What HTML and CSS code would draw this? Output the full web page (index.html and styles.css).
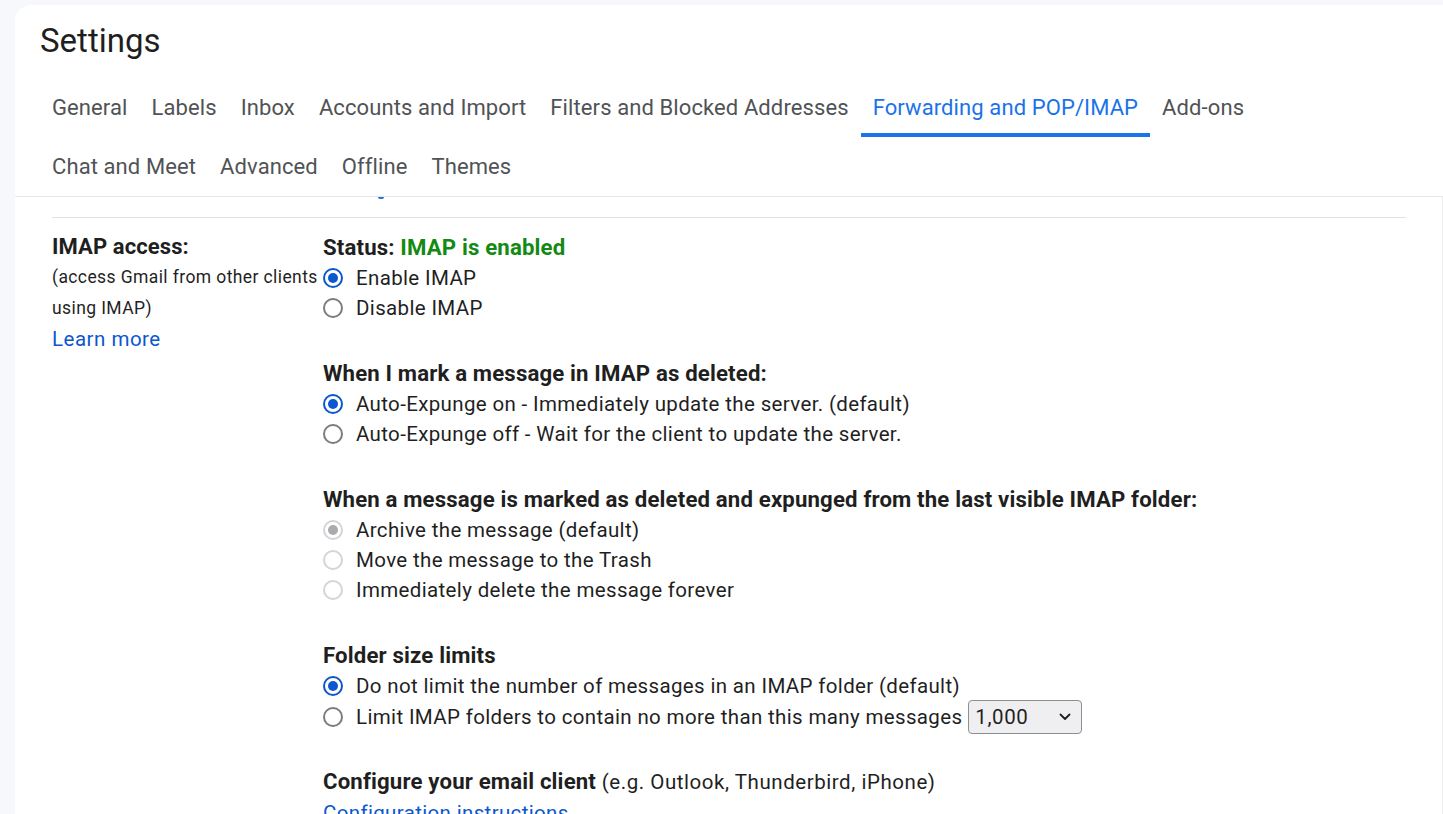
FILE: index.html
```html
<!DOCTYPE html>
<html lang="en">
<head>
<meta charset="utf-8">
<title>Settings</title>
<link rel="stylesheet" href="styles.css">
</head>
<body>
<div class="card">
  <header class="head">
    <h1 class="title">Settings</h1>
    <nav class="tabs">
      <div class="tab-row">
        <a class="tab">General</a>
        <a class="tab">Labels</a>
        <a class="tab">Inbox</a>
        <a class="tab">Accounts and Import</a>
        <a class="tab">Filters and Blocked Addresses</a>
        <a class="tab active">Forwarding and POP/IMAP</a>
        <a class="tab">Add-ons</a>
      </div>
      <div class="tab-row">
        <a class="tab">Chat and Meet</a>
        <a class="tab">Advanced</a>
        <a class="tab">Offline</a>
        <a class="tab">Themes</a>
      </div>
    </nav>
  </header>
  <main class="content">
    <div class="prev-row">
      <span class="tail"></span>
    </div>
    <div class="setting-row">
      <div class="label-col">
        <div class="label-title">IMAP access:</div>
        <div class="label-sub">(access Gmail from other clients using IMAP)</div>
        <a class="link learn">Learn more</a>
      </div>
      <div class="value-col">
        <section class="block first">
          <div class="heading">Status: <span class="ok">IMAP is enabled</span></div>
          <label class="opt"><span class="radio on"></span>Enable IMAP</label>
          <label class="opt"><span class="radio"></span>Disable IMAP</label>
        </section>
        <section class="block">
          <div class="heading">When I mark a message in IMAP as deleted:</div>
          <label class="opt"><span class="radio on"></span>Auto-Expunge on - Immediately update the server. (default)</label>
          <label class="opt"><span class="radio"></span>Auto-Expunge off - Wait for the client to update the server.</label>
        </section>
        <section class="block">
          <div class="heading">When a message is marked as deleted and expunged from the last visible IMAP folder:</div>
          <label class="opt"><span class="radio dis on"></span>Archive the message (default)</label>
          <label class="opt"><span class="radio dis"></span>Move the message to the Trash</label>
          <label class="opt"><span class="radio dis"></span>Immediately delete the message forever</label>
        </section>
        <section class="block">
          <div class="heading">Folder size limits</div>
          <label class="opt"><span class="radio on"></span>Do not limit the number of messages in an IMAP folder (default)</label>
          <label class="opt opt-select"><span class="radio"></span>Limit IMAP folders to contain no more than this many messages
            <span class="select">1,000<svg class="chev" width="12" height="8" viewBox="0 0 12 8"><path d="M1.5 1.5 6 6l4.5-4.5" fill="none" stroke="#1f1f1f" stroke-width="1.8" stroke-linecap="round" stroke-linejoin="round"/></svg></span>
          </label>
        </section>
        <section class="block tight">
          <div class="heading">Configure your email client <span class="reg">(e.g. Outlook, Thunderbird, iPhone)</span></div>
          <a class="link">Configuration instructions</a>
        </section>
      </div>
    </div>
    <div class="thumb"></div>
  </main>
</div>
</body>
</html>
```
FILE: styles.css
```css
html, body {
  margin: 0;
  padding: 0;
  height: 100%;
  overflow: hidden;
}
body {
  background: #f6f8fc;
  font-family: Roboto, "Liberation Sans", Arial, sans-serif;
  color: #1f1f1f;
}
.card {
  margin: 5px 0 0 15px;
  height: 809px;
  background: #fff;
  border-top-left-radius: 16px;
  display: flex;
  flex-direction: column;
  overflow: hidden;
}
.head {
  border-bottom: 1px solid #e4e7eb;
  padding: 0 0 0 25px;
}
.title {
  margin: 0;
  padding-top: 16px;
  font-size: 33px;
  line-height: 40px;
  font-weight: 400;
  color: #1f1f1f;
}
.tabs {
  margin-top: 19px;
  display: flex;
  flex-direction: column;
  gap: 2px;
}
.tab-row {
  display: flex;
}
.tab {
  padding: 16px 12px 13px;
  border-bottom: 4px solid transparent;
  font-size: 22px;
  line-height: 24px;
  letter-spacing: 0.1px;
  color: #505356;
  white-space: nowrap;
}
.tab.active {
  color: #1a73e8;
  border-bottom-color: #1a73e8;
}
.content {
  flex: 1;
  position: relative;
  overflow: hidden;
  border-right: 1px solid #ececec;
  padding: 0 36px 0 37px;
}
.thumb {
  position: absolute;
  right: -1px;
  top: 226px;
  width: 1px;
  bottom: 0;
  background: #c4c4c4;
}
.prev-row {
  height: 20px;
  border-bottom: 1px solid #e3e3e3;
  padding-left: 326px;
}
.tail {
  display: block;
  width: 6px;
  height: 2px;
  border-radius: 0 0 3px 3px;
  background: #2d6bd6;
}
.setting-row {
  display: flex;
  padding-top: 14px;
}
.label-col {
  width: 271px;
  flex: none;
}
.value-col {
  flex: 1;
  font-size: 20.5px;
  letter-spacing: 0.35px;
}
.label-title {
  font-weight: 700;
  font-size: 22px;
  line-height: 30px;
  letter-spacing: 0.1px;
}
.label-sub {
  font-size: 17.5px;
  line-height: 31px;
  letter-spacing: 0.4px;
  width: 272px;
  color: #1f1f1f;
}
.link {
  color: #0b57d0;
  text-decoration: none;
}
.learn {
  display: block;
  font-size: 20.5px;
  letter-spacing: 0.5px;
  line-height: 31px;
}
.block {
  margin-top: 35px;
}
.block.first {
  margin-top: 0;
}
.block.tight {
  margin-top: 33px;
}
.heading {
  font-weight: 700;
  font-size: 22.2px;
  letter-spacing: 0.15px;
  line-height: 30px;
  margin-bottom: 1px;
  white-space: nowrap;
}
.heading .reg {
  font-weight: 400;
  font-size: 20.5px;
  letter-spacing: 0.55px;
}
.ok {
  color: #138a13;
}
.block .link {
  display: block;
  line-height: 30px;
}
.opt {
  display: flex;
  align-items: center;
  height: 30px;
  white-space: nowrap;
}
.opt-select {
  height: 32px;
}
.radio {
  box-sizing: border-box;
  width: 20px;
  height: 20px;
  border-radius: 50%;
  border: 2.5px solid #7a7c80;
  margin: 0 13px 0 0;
  flex: none;
  display: inline-flex;
  align-items: center;
  justify-content: center;
}
.radio.on {
  border-color: #0b57d0;
}
.radio.on::after {
  content: "";
  width: 10px;
  height: 10px;
  border-radius: 50%;
  background: #0b57d0;
}
.radio.dis {
  border-color: #d3d4d6;
}
.radio.dis.on::after {
  background: #a9abae;
}
.select {
  margin-left: 6px;
  box-sizing: border-box;
  width: 114px;
  height: 34px;
  border: 1px solid #8e8f94;
  border-radius: 4px;
  background: #efeff1;
  display: inline-flex;
  align-items: center;
  justify-content: space-between;
  padding: 0 10px 0 6px;
  letter-spacing: 0.6px;
}
.chev {
  display: block;
}
```
